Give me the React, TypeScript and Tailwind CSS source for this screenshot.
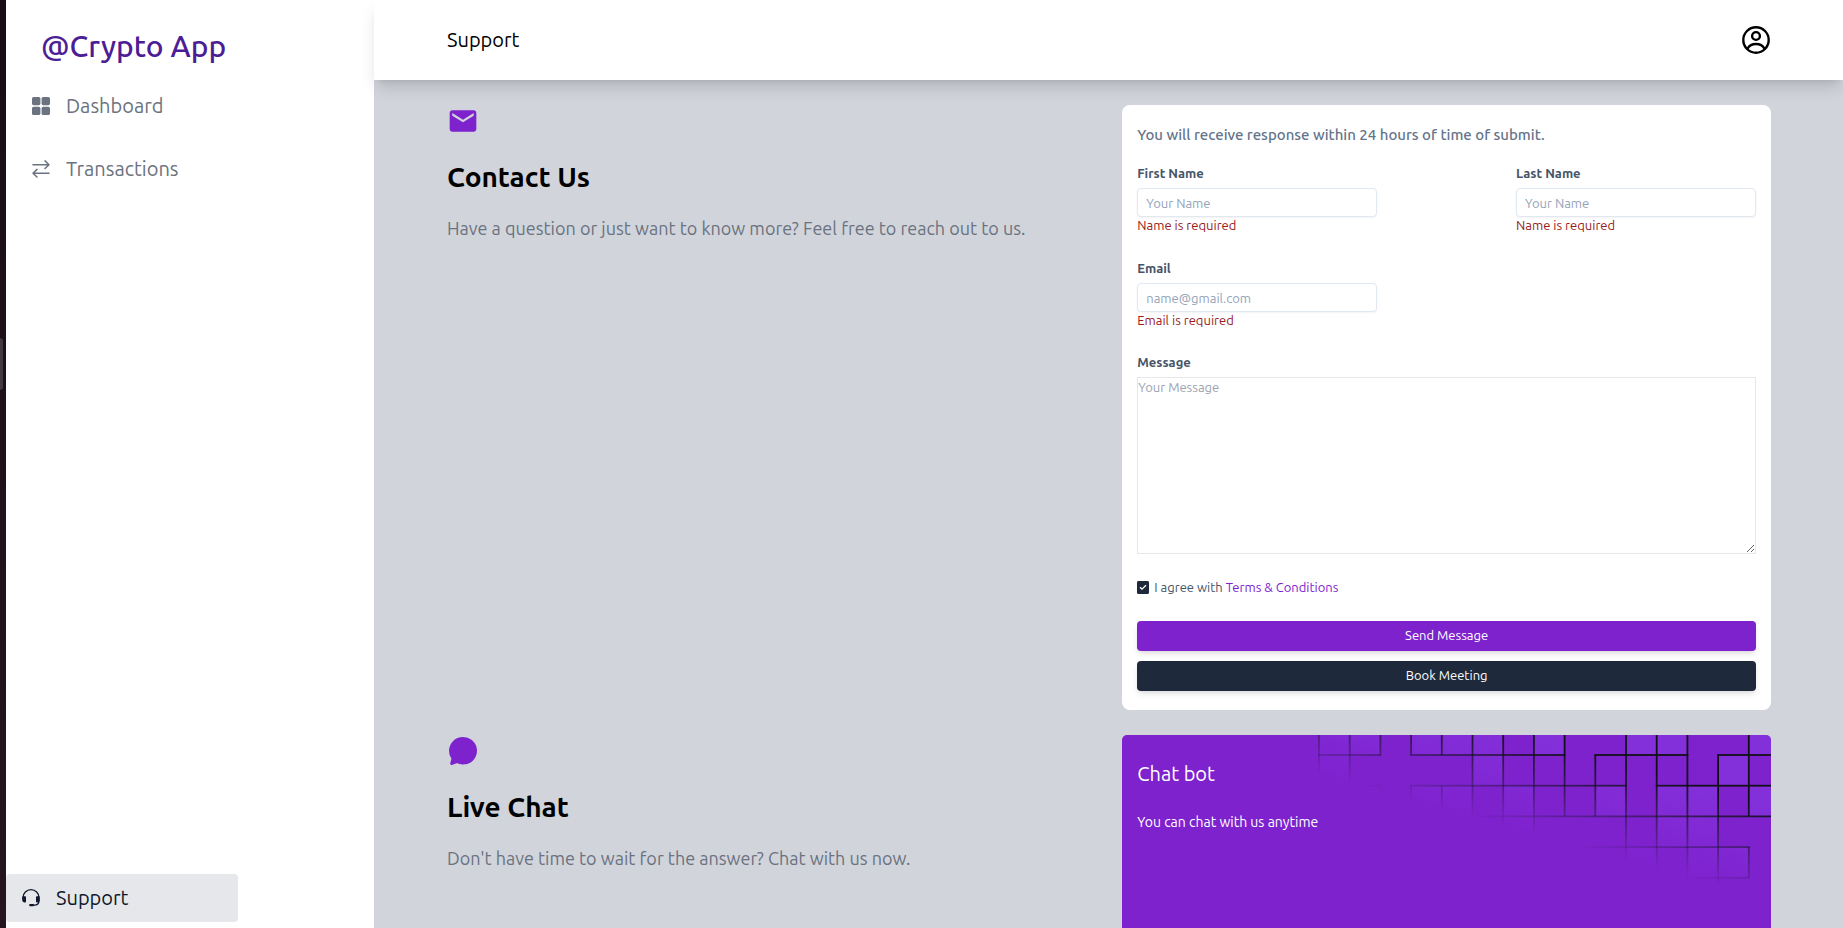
import React from "react";
import { MdEmail } from "react-icons/md";
import { IoChatbubble } from "react-icons/io5";

const DashboardIcon = () => (
  <svg viewBox="0 0 18 18" className="h-[18px] w-[18px]" fill="currentColor" aria-hidden="true">
    <rect x="0" y="0" width="8.4" height="8.2" rx="1.6" />
    <rect x="9.6" y="0" width="8.4" height="8.2" rx="1.6" />
    <rect x="0" y="9.8" width="8.4" height="8.2" rx="1.6" />
    <rect x="9.6" y="9.8" width="8.4" height="8.2" rx="1.6" />
  </svg>
);

const TransferIcon = () => (
  <svg
    viewBox="0 0 18 18"
    className="h-[18px] w-[18px]"
    fill="none"
    stroke="currentColor"
    strokeWidth="1.5"
    strokeLinecap="round"
    strokeLinejoin="round"
    aria-hidden="true"
  >
    <path d="M1 4.7h16M13 .9l4 3.8-4 3.8M17 13.2H1M5 9.4l-4 3.8L5 17" />
  </svg>
);

const HeadsetIcon = () => (
  <svg viewBox="0 0 18 18" className="h-[18px] w-[18px]" fill="currentColor" aria-hidden="true">
    <path
      d="M1 11.500V8.700a8 8 0 0 1 16 0v2.800c0 3-1.600 4.600-4.600 4.600h-1.400"
      fill="none"
      stroke="currentColor"
      strokeWidth="1.3"
    />
    <path d="M1 7.200h2.200a.8.800 0 0 1 .8.800v4.600a.8.800 0 0 1-.8.800h-1A1.800 1.800 0 0 1 .4 11.600V7.200z" />
    <path d="M17 7.200h-2.200a.8.800 0 0 0-.8.800v4.600a.8.800 0 0 0 .8.800h1a1.800 1.800 0 0 0 1.800-1.800V7.200z" />
    <rect x="7.200" y="14.900" width="4.800" height="2.300" rx=".9" />
  </svg>
);

const ProfileIcon = () => (
  <svg viewBox="0 0 28 28" className="h-7 w-7" fill="none" stroke="currentColor" strokeWidth="2.4" aria-hidden="true">
    <circle cx="14" cy="14" r="12.7" />
    <circle cx="14" cy="10" r="3.9" />
    <path d="M5.4 22.8C7.2 19.6 10.3 18 14 18s6.800 1.600 8.600 4.800" />
  </svg>
);

const CELL = 30.7;
const TOP = 20;
const colX = (c: number) => 1 + c * CELL;
const rowY = (r: number) => (r === 0 ? 0 : TOP + (r - 1) * CELL);

// [column, first row, last row]
const verticals: [number, number, number][] = [
  [0, 0, 2], [1, 0, 2], [2, 0, 1], [2, 2, 3], [3, 0, 1], [3, 2, 3], [4, 0, 1], [4, 2, 3],
  [5, 0, 3], [6, 0, 4], [7, 0, 4], [8, 0, 3], [9, 1, 3], [9, 4, 5], [10, 0, 5], [11, 0, 5],
  [12, 0, 5], [13, 1, 6], [14, 0, 3], [14, 4, 5],
];

// [row, first column, last column]
const horizontals: [number, number, number][] = [
  [1, 0, 2], [1, 3, 8], [1, 9, 12], [1, 13, 15],
  [2, 1, 2], [2, 3, 10], [2, 11, 15],
  [3, 4, 15], [4, 7, 14], [5, 12, 14],
];

// [row, column]
const filled: [number, number][] = [
  [0, 0], [0, 1], [0, 3], [0, 4], [0, 5], [0, 7], [0, 10], [0, 11], [0, 14],
  [1, 0], [1, 5], [1, 13],
  [2, 3], [2, 4], [2, 6], [2, 9], [2, 11], [2, 12], [2, 14],
  [3, 6], [3, 11], [3, 12],
  [4, 10], [4, 12], [4, 13],
];

const GridPattern = () => (
  <svg viewBox="0 0 453 170" width="453" height="170" className="absolute top-0 right-0" aria-hidden="true">
    <defs>
      <linearGradient id="lineFade" gradientUnits="userSpaceOnUse" x1="14.500" y1="-51.900" x2="-10.400" y2="37.100">
        <stop offset="0" stopColor="#111018" stopOpacity="1" />
        <stop offset="1" stopColor="#111018" stopOpacity="0" />
      </linearGradient>
      <linearGradient id="cellFade" gradientUnits="userSpaceOnUse" x1="14.500" y1="-51.900" x2="-10.400" y2="37.100">
        <stop offset="0" stopColor="#8b46ee" stopOpacity="0.38" />
        <stop offset="1" stopColor="#8b46ee" stopOpacity="0" />
      </linearGradient>
    </defs>
    {filled.map(([r, c]) => (
      <rect key={`${r}-${c}`} x={colX(c)} y={rowY(r)} width={CELL} height={rowY(r + 1) - rowY(r)} fill="url(#cellFade)" />
    ))}
    {verticals.map(([c, a, b]) => (
      <rect key={`v${c}-${a}`} x={colX(c) - 0.9} y={rowY(a)} width="1.8" height={rowY(b) - rowY(a)} fill="url(#lineFade)" />
    ))}
    {horizontals.map(([r, a, b]) => (
      <rect key={`h${r}-${a}`} x={colX(a) - 0.9} y={rowY(r) - 0.9} width={(b - a) * CELL + 1.8} height="1.8" fill="url(#lineFade)" />
    ))}
  </svg>
);

type FieldProps = { id: string; label: string; placeholder: string; error: string; type?: string };

const Field = ({ id, label, placeholder, error, type = "text" }: FieldProps) => (
  <div className="flex w-60 flex-col">
    <label htmlFor={id} className="mb-[5px] text-[13px] leading-5 font-semibold text-[#475569]">
      {label}
    </label>
    <input
      id={id}
      type={type}
      placeholder={placeholder}
      className="h-[29px] w-full rounded border border-[#e2e8f0] bg-white px-2 text-[13px] shadow-xs outline-none placeholder:text-[#94a3b8]"
    />
    <p className="text-[13px] leading-4 text-[#991b1b]">{error}</p>
  </div>
);

type TopicProps = { icon: React.ReactNode; title: string; text: string; children: React.ReactNode };

const Topic = ({ icon, title, text, children }: TopicProps) => (
  <section className="flex items-start justify-between">
    <div className="flex flex-col">
      <div className="text-[#7e22ce]">{icon}</div>
      <h2 className="mt-5 text-[28px] leading-10 font-bold text-black">{title}</h2>
      <p className="mt-[17px] text-[18px] leading-7 text-[#6b7280]">{text}</p>
    </div>
    {children}
  </section>
);

export default function App() {
  return (
    <div className="flex h-screen overflow-hidden bg-white font-['Ubuntu','Noto_Sans',sans-serif]">
      <div className="flex w-[6px] shrink-0 items-center bg-gradient-to-b from-[#180d15] to-[#26141f]">
        <div className="mb-50 h-[52px] w-[3px] rounded-r bg-[#413840]" />
      </div>

      <aside className="flex w-92 shrink-0 flex-col justify-between bg-white pb-[6px]">
        <div>
          <h1 className="mt-6 ml-[35px] text-[30px] leading-[45px] font-medium text-[#4c1d95]">@Crypto App</h1>
          <nav className="mt-[23px] ml-[26px] flex flex-col gap-[35px] text-[20px] leading-7 text-[#6b7280]">
            <a href="#dashboard" className="flex items-center gap-4">
              <DashboardIcon />
              Dashboard
            </a>
            <a href="#transactions" className="flex items-center gap-4">
              <TransferIcon />
              Transactions
            </a>
          </nav>
        </div>
        <a
          href="#support"
          className="flex h-12 w-58 items-center gap-4 rounded bg-[#e5e7eb] px-4 text-[20px] text-[#0f172a]"
        >
          <HeadsetIcon />
          Support
        </a>
      </aside>

      <div className="flex min-w-0 flex-1 flex-col">
        <header className="relative flex h-20 shrink-0 items-center justify-between bg-white px-[73px] shadow-[0_10px_15px_-3px_rgba(0,0,0,0.15),0_4px_6px_-4px_rgba(0,0,0,0.1)]">
          <span className="text-[20px] text-black">Support</span>
          <button type="button" aria-label="Profile" className="text-black">
            <ProfileIcon />
          </button>
        </header>

        <main className="flex flex-1 flex-col gap-[25px] overflow-hidden bg-[#d1d5db] pt-[25px] pr-[72px] pl-[73px]">
          <Topic
            icon={<MdEmail size={32} />}
            title="Contact Us"
            text="Have a question or just want to know more? Feel free to reach out to us."
          >
            <form className="flex w-[49%] shrink-0 flex-col rounded-lg bg-white px-[15px] pt-[15px] pb-[19px]">
              <p className="text-[15px] leading-[30px] font-medium text-[#64748b]">
                You will receive response within 24 hours of time of submit.
              </p>
              <div className="mt-[13px] flex justify-between">
                <Field id="first" label="First Name" placeholder="Your Name" error="Name is required" />
                <Field id="last" label="Last Name" placeholder="Your Name" error="Name is required" />
              </div>
              <div className="mt-[25px]">
                <Field id="email" label="Email" placeholder="name@gmail.com" error="Email is required" type="email" />
              </div>
              <label htmlFor="message" className="mt-6 mb-[5px] text-[13px] leading-5 font-semibold text-[#475569]">
                Message
              </label>
              <textarea
                id="message"
                placeholder="Your Message"
                className="block h-[177px] w-full border border-[#e5e7eb] bg-white text-[13px] leading-[18px] outline-none placeholder:text-[#9ca3af]"
              />
              <div className="mt-[25px] flex items-center gap-[5px] text-[13px] leading-4 text-[#475569]">
                <span className="relative flex">
                  <input
                    id="terms"
                    type="checkbox"
                    defaultChecked
                    className="peer h-[13px] w-[12px] appearance-none rounded-xs bg-white ring-1 ring-[#1e293b] ring-inset checked:bg-[#1e293b]"
                  />
                  <svg
                    viewBox="0 0 12 12"
                    className="pointer-events-none absolute top-0 left-0 hidden h-3 w-3 peer-checked:block"
                    fill="none"
                    stroke="white"
                    strokeWidth="1.3"
                    aria-hidden="true"
                  >
                    <path d="M3 6.200l2 2 4-4" />
                  </svg>
                </span>
                <span>
                  <label htmlFor="terms">I agree with</label>{" "}
                  <a href="#terms-and-conditions" className="text-[#7e22ce]">
                    Terms &amp; Conditions
                  </a>
                </span>
              </div>
              <button
                type="submit"
                className="mt-[26px] h-[30px] rounded bg-[#7e22ce] text-[13px] text-white shadow-md"
              >
                Send Message
              </button>
              <button
                type="button"
                className="mt-[10px] h-[30px] rounded bg-[#1e293b] text-[13px] text-white shadow-md"
              >
                Book Meeting
              </button>
            </form>
          </Topic>

          <Topic
            icon={<IoChatbubble size={32} />}
            title="Live Chat"
            text="Don't have time to wait for the answer? Chat with us now."
          >
            <div className="relative h-[250px] w-[49%] shrink-0 overflow-hidden rounded-[5px] bg-[#7e22ce] px-[15px] pt-6 text-white">
              <GridPattern />
              <h3 className="relative text-[20px] leading-[30px]">Chat bot</h3>
              <p className="relative mt-[21px] text-[14px] leading-6">You can chat with us anytime</p>
            </div>
          </Topic>
        </main>
      </div>
    </div>
  );
}
